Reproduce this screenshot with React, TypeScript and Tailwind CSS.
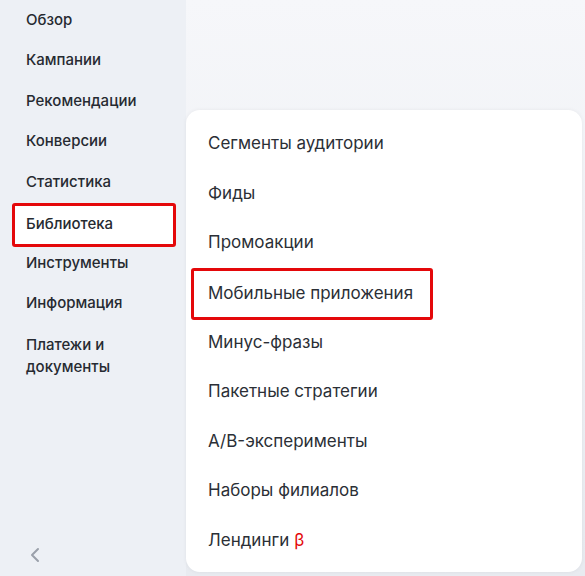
import React from "react";

const side = [
  "Обзор",
  "Кампании",
  "Рекомендации",
  "Конверсии",
  "Статистика",
  "Библиотека",
  "Инструменты",
  "Информация",
];

const lib = [
  "Сегменты аудитории",
  "Фиды",
  "Промоакции",
  "Мобильные приложения",
  "Минус-фразы",
  "Пакетные стратегии",
  "A/B-эксперименты",
  "Наборы филиалов",
];

export default function App() {
  return (
    <div
      className="flex h-[576px] w-[585px] overflow-hidden text-[#21252b]"
      style={{ fontFamily: "Inter, 'Noto Sans', sans-serif" }}
    >
      <aside className="flex w-[186px] shrink-0 flex-col bg-[#edf0f5] pt-[10px] font-medium text-[#262a31]">
        <nav className="flex flex-col">
          {side.map((s) => (
            <div key={s} className="h-[40.5px] px-[12px]">
              {s === "Библиотека" ? (
                <div className="-mt-[10px] flex h-[44px] w-[164px] items-center rounded-[3px] border-[3px] border-[#e4080a] bg-white pl-[11px] text-[15px]">
                  {s}
                </div>
              ) : (
                <div className="flex h-[20px] items-center pl-[14px] text-[15px]">{s}</div>
              )}
            </div>
          ))}
          <div className="px-[26px] text-[15px] leading-[22px]">
            Платежи и
            <br />
            документы
          </div>
        </nav>
        <div className="mt-auto pb-[12px] pl-[28px] text-[#9aa0aa]">
          <svg width="14" height="18" viewBox="0 0 14 18" fill="none">
            <path d="M10 3 L4 9 L10 15" stroke="currentColor" strokeWidth="2" strokeLinecap="round" strokeLinejoin="round" />
          </svg>
        </div>
      </aside>
      <main className="flex flex-1 flex-col bg-linear-to-b from-[#f6f7fa] to-[#e8ebf0] pt-[110px] pr-[3px] pb-[4px]">
        <div className="flex flex-1 flex-col rounded-[14px] bg-white pt-[22px] text-[#2b2f36] shadow-[0_0_4px_rgba(0,0,0,0.06)]">
          {lib.map((s) => (
            <div key={s} className="h-[49.6px] px-[5px]">
              {s === "Мобильные приложения" ? (
                <div className="-mt-[13px] flex h-[52px] w-[242px] items-center rounded-[3px] border-[3px] border-[#e4080a] pl-[14px] text-[17px]">
                  {s}
                </div>
              ) : (
                <div className="flex h-[24px] items-center pl-[17px] text-[17px]">{s}</div>
              )}
            </div>
          ))}
          <div className="flex h-[24px] items-center pl-[22px] text-[17px]">
            Лендинги <span className="ml-[5px] text-[#e4080a]">β</span>
          </div>
        </div>
      </main>
    </div>
  );
}
